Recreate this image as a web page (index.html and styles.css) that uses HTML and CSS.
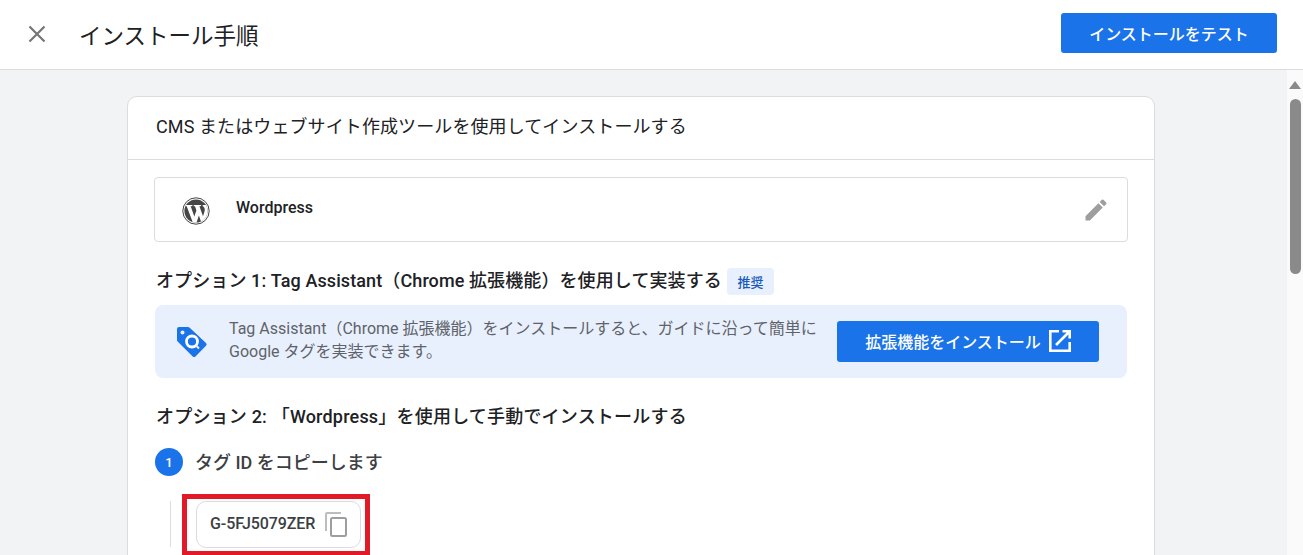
FILE: index.html
```html
<!DOCTYPE html>
<html lang="ja">
<head>
<meta charset="utf-8">
<title>インストール手順</title>
<link rel="stylesheet" href="styles.css">
</head>
<body>
<header class="topbar">
  <svg class="close" viewBox="0 0 18 18" width="18" height="18"><path d="M1.5 1.5l15 15M16.5 1.5l-15 15" fill="none" stroke="#757575" stroke-width="2.2"/></svg>
  <h1 class="title">インストール手順</h1>
  <button class="btn btn-test">インストールをテスト</button>
</header>
<div class="main">
  <div class="content">
    <section class="card">
      <div class="card-head">CMS またはウェブサイト作成ツールを使用してインストールする</div>
      <div class="card-body">
        <div class="cms-box">
          <svg class="wp" viewBox="0 0 28 28" width="28" height="28">
            <clipPath id="wp-disc"><circle cx="14" cy="14" r="11.6"/></clipPath>
            <circle cx="14" cy="14" r="13.2" fill="none" stroke="#464646" stroke-width="1"/>
            <circle cx="14" cy="14" r="11.6" fill="#464646"/>
            <g clip-path="url(#wp-disc)">
              <path d="M3 8h7.400v1l-1.700.2 3.600 10.200 2.100-6-1.400-4.100-1.300-.1V8h7.400v1l-1.700.2 3.600 10 1.500-4.700c.8-2.500-.2-4.200-1.800-5.400V8h4.700l1.400 2.800-.3 4.400-4.200 12-2 1-3.400-9.600-3.300 9.600-1.900-.4L4.700 9.200 3 9z" fill="#fff"/>
            </g>
          </svg>
          <span class="cms-name">Wordpress</span>
          <svg class="edit" viewBox="0 0 24 24" width="28" height="28"><path d="M3 17.250V21h3.750L17.810 9.940l-3.750-3.750L3 17.250zM20.710 7.040a1 1 0 0 0 0-1.410l-2.340-2.340a1 1 0 0 0-1.410 0l-1.830 1.830 3.750 3.750 1.830-1.830z" fill="#9e9e9e"/></svg>
        </div>
        <div class="option opt1">
          <h2 class="opt-title opt-title-1">オプション 1: Tag Assistant（Chrome 拡張機能）を使用して実装する</h2>
          <span class="badge">推奨</span>
        </div>
        <div class="banner">
          <svg class="tag" viewBox="0 0 32 32" width="32" height="32">
            <path d="M3 1h9a2 2 0 0 1 1.400.6L30 17a2 2 0 0 1 0 2.800L19.500 30.400a2 2 0 0 1-2.800 0L1.600 15.500A2 2 0 0 1 1 14V3a2 2 0 0 1 2-2z" fill="#1a73e8"/>
            <circle cx="6.500" cy="6.500" r="2" fill="#e8f0fe"/>
            <circle cx="16" cy="15.500" r="5.500" fill="none" stroke="#fff" stroke-width="2.800"/>
            <path d="M20 19.500l3 3" stroke="#e8f0fe" stroke-width="2"/>
          </svg>
          <p class="banner-text">Tag Assistant（Chrome 拡張機能）をインストールすると、ガイドに沿って簡単に Google タグを実装できます。</p>
          <button class="btn btn-ext">拡張機能をインストール
            <svg class="ext" viewBox="0 0 22 22" width="22" height="22"><path d="M10 1.300H1.300v19.400h19.400V12M7 15L20 2M13.500 1.300h7.200v7.200" fill="none" stroke="#fff" stroke-width="2.600"/></svg>
          </button>
        </div>
        <h2 class="opt-title opt2">オプション 2: 「Wordpress」を使用して手動でインストールする</h2>
        <div class="step">
          <span class="step-num">1</span>
          <span class="step-label">タグ ID をコピーします</span>
        </div>
        <div class="step-body">
          <div class="red-frame">
            <div class="tag-id">
              <span class="tag-value">G-5FJ5079ZER</span>
              <svg class="copy" viewBox="0 0 22 25" width="22" height="25"><path d="M16 1H2a1 1 0 0 0-1 1v17" fill="none" stroke="#bdbdbd" stroke-width="2"/><rect x="6" y="6" width="15" height="18" rx="1.500" fill="none" stroke="#9e9e9e" stroke-width="2"/></svg>
            </div>
          </div>
        </div>
      </div>
    </section>
  </div>
  <div class="scrollbar">
    <span class="arrow"></span>
    <span class="thumb"></span>
  </div>
</div>
</body>
</html>
```
FILE: styles.css
```css
* { box-sizing: border-box; }
html, body { margin: 0; height: 555px; overflow: hidden; }
body {
  font-family: Roboto, "Noto Sans CJK JP", sans-serif;
  color: #202124;
  background: #f1f3f4;
  display: flex;
  flex-direction: column;
}
.topbar {
  height: 70px;
  flex: none;
  display: flex;
  align-items: center;
  background: #fff;
  border-bottom: 1px solid #dadce0;
  padding: 0 26px 4px 28px;
}
.close { flex: none; margin-top: 3px; }
.title {
  margin: 6px 0 0 33px;
  font-size: 22.500px;
  font-weight: 400;
  line-height: 30px;
  flex: 1;
}
.btn {
  border: 0;
  border-radius: 3px;
  background: #1a73e8;
  color: #fff;
  font-family: inherit;
  font-weight: 500;
  font-size: 16px;
  display: flex;
  align-items: center;
  justify-content: center;
}
.btn-test { width: 216px; height: 40px; }
.main { flex: 1; display: flex; min-height: 0; }
.content { flex: 1; padding: 26px 132px 0 127px; min-width: 0; }
.card {
  background: #fff;
  border: 1px solid #dadce0;
  border-radius: 10px;
  height: 600px;
}
.card-head {
  height: 63px;
  padding: 0 28px 7px;
  display: flex;
  align-items: center;
  font-size: 18px;
  letter-spacing: 0.1px;
  border-bottom: 1px solid #dadce0;
}
.card-body { padding: 17px 26px 0; }
.cms-box {
  height: 65px;
  border: 1px solid #dadce0;
  border-radius: 4px;
  display: flex;
  align-items: center;
  padding: 0 17px 0 27px;
}
.wp { flex: none; margin-top: 2px; }
.cms-name { margin-left: 26px; font-size: 16px; font-weight: 500; flex: 1; margin-top: -4px; }
.edit { flex: none; }
.option { display: flex; align-items: center; gap: 5px; }
.opt1 { margin-top: 25px; height: 28px; padding-left: 2px; }
.opt-title { margin: 0; font-size: 18px; font-weight: 500; line-height: 24px; }
.opt-title-1 { letter-spacing: 0.1px; }
.badge {
  background: #e8f0fe;
  color: #185abc;
  font-size: 13px;
  font-weight: 500;
  border-radius: 4px;
  height: 27px;
  width: 47px;
  display: flex;
  align-items: center;
  justify-content: center;
}
.banner {
  margin: 10px 1px 0;
  height: 73px;
  background: #e8f0fe;
  border-radius: 8px;
  display: flex;
  align-items: center;
  padding: 0 28px 0 21px;
}
.tag { flex: none; }
.banner-text {
  margin: -4px 0 0 21px;
  width: 600px;
  flex: none;
  font-size: 16px;
  line-height: 23px;
  color: #5f6368;
}
.btn-ext { margin-left: auto; width: 262px; height: 41px; gap: 8px; padding-bottom: 3px; }
.ext { flex: none; }
.opt2 { margin: 27px 0 0 2px; letter-spacing: 0.2px; }
.step { display: flex; align-items: center; margin: 18px 0 0 1px; height: 30px; }
.step-num {
  width: 28px;
  height: 28px;
  border-radius: 50%;
  background: #1a73e8;
  color: #fff;
  font-size: 13px;
  font-weight: 500;
  display: flex;
  align-items: center;
  justify-content: center;
}
.step-label { margin-left: 12px; font-size: 18px; font-weight: 500; color: #3c4043; margin-top: -3px; }
.step-body {
  margin: 24px 0 0 16px;
  border-left: 1px solid #dadce0;
  height: 46px;
  position: relative;
}
.red-frame {
  position: absolute;
  left: 11px;
  top: -7px;
  width: 188px;
  height: 62px;
  border: 5px solid #e21a27;
  padding: 2px 4px 0 9px;
}
.tag-id {
  height: 47px;
  border: 1px solid #dadce0;
  border-radius: 10px;
  display: flex;
  align-items: center;
  justify-content: space-between;
  padding: 0 13px 0 13px;
}
.tag-value { font-size: 16px; font-weight: 500; color: #3c4043; letter-spacing: -0.1px; margin-top: -2px; }
.copy { flex: none; }
.scrollbar {
  width: 16px;
  flex: none;
  background: #fafafa;
  display: flex;
  flex-direction: column;
  align-items: center;
  padding-top: 11px;
}
.arrow {
  width: 0;
  height: 0;
  border-left: 6px solid transparent;
  border-right: 6px solid transparent;
  border-bottom: 8px solid #8a8a8a;
}
.thumb {
  width: 11px;
  height: 175px;
  margin-top: 10px;
  border-radius: 6px;
  background: #8a8a8a;
}
```
